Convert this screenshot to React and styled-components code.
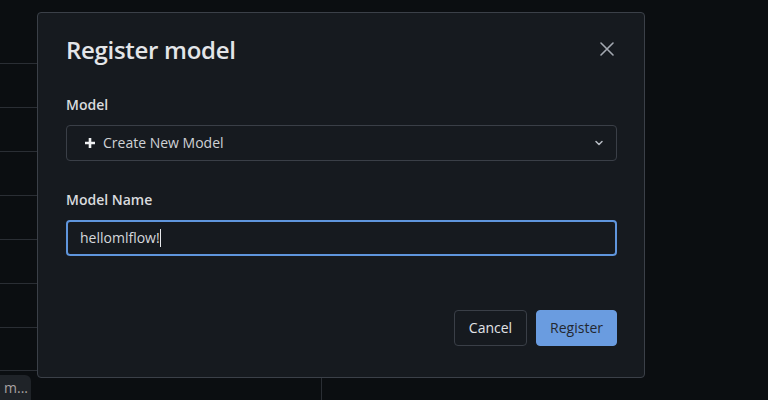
import styled, { createGlobalStyle } from "styled-components";

const Global = createGlobalStyle`
  html, body {
    margin: 0;
    padding: 0;
    background: #0b0e11;
    font-family: "Open Sans", "Noto Sans", sans-serif;
  }
  * { box-sizing: border-box; }
`;

const Page = styled.div`
  position: relative;
  width: 768px;
  height: 400px;
  overflow: hidden;
  background: #0b0e11;
  display: flex;
  flex-direction: column;
`;

const Table = styled.div`
  width: 322px;
  height: 370px;
  flex-shrink: 0;
  display: flex;
  flex-direction: column;
  padding-top: 63px;
  overflow: hidden;
`;

const Row = styled.div`
  height: 44px;
  flex-shrink: 0;
  border-top: 1px solid #2a2e34;
`;

const BottomBar = styled.div`
  flex: 1;
  display: flex;
`;

const BottomCell = styled.div`
  width: ${(p) => (p.$w ? `${p.$w}px` : "auto")};
  flex: ${(p) => (p.$w ? "none" : 1)};
  border-top: ${(p) => (p.$divider ? "none" : "1px solid #2a2e34")};
  border-left: ${(p) => (p.$divider ? "1px solid #2a2e34" : "none")};
`;

const Toast = styled.div`
  position: absolute;
  left: 0;
  bottom: 0;
  width: 31px;
  height: 25px;
  background: #1f2328;
  border-top-right-radius: 6px;
  overflow: hidden;
  display: flex;
  justify-content: flex-end;
  align-items: center;
  padding-right: 3px;
  font-size: 14px;
  color: #a9a2a2;
  white-space: nowrap;
`;

const Dialog = styled.div`
  position: absolute;
  left: 37px;
  top: 12px;
  width: 608px;
  height: 366px;
  background: #161a1f;
  border: 1px solid #3b4048;
  border-radius: 4px;
  padding: 20px 27px 0 28px;
  display: flex;
  flex-direction: column;
`;

const Header = styled.div`
  display: flex;
  align-items: center;
  justify-content: space-between;
  height: 32px;
`;

const Title = styled.h2`
  margin: 0;
  font-size: 24px;
  font-weight: 600;
  color: #e3e5e8;
  letter-spacing: -0.3px;
`;

const Close = styled.button`
  background: none;
  border: none;
  padding: 0;
  width: 20px;
  height: 20px;
  display: flex;
  align-items: center;
  justify-content: center;
  color: #a3a8b0;
  cursor: pointer;
`;

const Label = styled.div`
  margin-top: ${(p) => p.$top}px;
  font-size: 14px;
  line-height: 20px;
  font-weight: 600;
  color: #d9dbde;
`;

const Select = styled.div`
  margin-top: 10px;
  height: 36px;
  border: 1px solid #3a3f47;
  border-radius: 4px;
  display: flex;
  align-items: center;
  padding: 0 12px 0 17px;
  gap: 7px;
  font-size: 14px;
  line-height: 20px;
  color: #cfd2d6;
`;

const Grow = styled.span`
  flex: 1;
  margin-top: -1px;
`;

const Input = styled.div`
  margin-top: 10px;
  height: 36px;
  border: 2px solid #5f95dc;
  border-radius: 4px;
  display: flex;
  align-items: center;
  padding: 0 12px 1px;
  font-size: 14px;
  color: #d5d8dc;
`;

const Caret = styled.span`
  width: 1px;
  height: 18px;
  background: #e6e8eb;
`;

const Footer = styled.div`
  margin-top: 54px;
  display: flex;
  justify-content: flex-end;
  gap: 9px;
`;

const Button = styled.button`
  height: 36px;
  padding: 0 ${(p) => (p.$primary ? 13 : 14)}px 1px;
  border-radius: 4px;
  font-family: inherit;
  font-size: 14px;
  cursor: pointer;
  border: 1px solid ${(p) => (p.$primary ? "#6a9ce0" : "#3a3f47")};
  background: ${(p) => (p.$primary ? "#6a9ce0" : "#161a1f")};
  color: ${(p) => (p.$primary ? "#232830" : "#e2e4e7")};
`;

const App = () => {
  return (
    <>
      <Global />
      <Page>
        <Table>
          {Array.from({ length: 7 }).map((_, i) => (
            <Row key={i} />
          ))}
        </Table>
        <BottomBar>
          <BottomCell $w={321} />
          <BottomCell $divider />
        </BottomBar>
        <Toast>m...</Toast>
        <Dialog>
          <Header>
            <Title>Register model</Title>
            <Close>
              <svg width="14" height="14" viewBox="0 0 14 14">
                <path
                  d="M1 1 L13 13 M13 1 L1 13"
                  stroke="currentColor"
                  strokeWidth="1.6"
                  strokeLinecap="round"
                />
              </svg>
            </Close>
          </Header>
          <Label $top={30}>Model</Label>
          <Select>
            <svg width="12" height="12" viewBox="0 0 12 12">
              <path d="M6 1 V11 M1 6 H11" stroke="#eef0f2" strokeWidth="2.6" />
            </svg>
            <Grow>Create New Model</Grow>
            <svg width="10" height="10" viewBox="0 0 10 10">
              <path
                d="M2 3.5 L5 6.5 L8 3.5"
                fill="none"
                stroke="#b7bcc3"
                strokeWidth="1.5"
                strokeLinecap="round"
                strokeLinejoin="round"
              />
            </svg>
          </Select>
          <Label $top={29}>Model Name</Label>
          <Input>
            hellomlflow!
            <Caret />
          </Input>
          <Footer>
            <Button>Cancel</Button>
            <Button $primary>Register</Button>
          </Footer>
        </Dialog>
      </Page>
    </>
  );
};

export default App;
